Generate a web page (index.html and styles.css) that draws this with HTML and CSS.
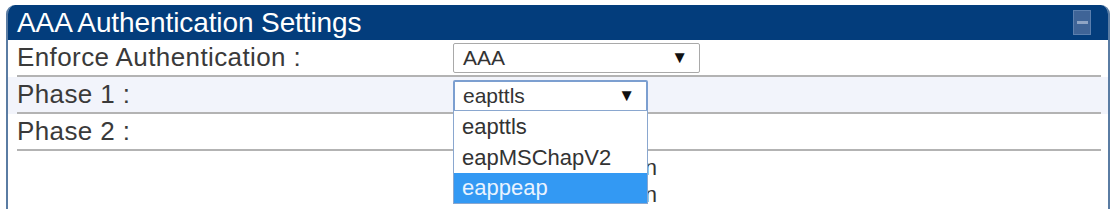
FILE: index.html
```html
<!DOCTYPE html>
<html lang="en">
<head>
    <meta charset="UTF-8">
    <title>AAA Authentication Settings</title>
    <link rel="stylesheet" href="styles.css">
</head>
<body>
<div class="panel">
    <div class="panel-head">
        <h2>AAA Authentication Settings</h2>
        <span class="collapse"><i></i></span>
    </div>

    <div class="row">
        <div class="row-inner">
            <div class="label">Enforce Authentication :</div>
            <div class="field">
                <div class="select wide">AAA<span class="arrow">&#9660;</span></div>
            </div>
        </div>
    </div>
    <div class="row alt">
        <div class="row-inner">
            <div class="label">Phase 1 :</div>
            <div class="field">
                <div class="select narrow focus">eapttls<span class="arrow">&#9660;</span></div>
                <ul class="options">
                    <li>eapttls</li>
                    <li>eapMSChapV2</li>
                    <li class="picked">eappeap</li>
                </ul>
            </div>
        </div>
    </div>
    <div class="row">
        <div class="row-inner">
            <div class="label">Phase 2 :</div>
            <div class="field"></div>
        </div>
    </div>

    <div class="extra">
        <div class="extra-line">Domain</div>
        <div class="extra-line">Domain</div>
    </div>
</div>
</body>
</html>
```

FILE: styles.css
```css
*{
    margin: 0;
    padding: 0;
    box-sizing: border-box;
}
body{
    background: #fff;
    font-family: "Liberation Sans", Arial, sans-serif;
    color: #333;
}
.panel{
    margin: 5px 2px 0 6px;
    height: 220px;
    border-left: 2px solid #5a7ca3;
    border-right: 2px solid #5a7ca3;
    border-radius: 9px 9px 0 0;
    overflow: hidden;
    position: relative;
}
.panel-head{
    height: 35px;
    background-color: #033d7c;
    display: flex;
    align-items: center;
    justify-content: space-between;
    padding: 0 17px 0 9px;
}
.panel-head h2{
    font-weight: normal;
    font-size: 28px;
    color: #fff;
    letter-spacing: -0.1px;
}
.collapse{
    width: 18px;
    height: 25px;
    background-color: #3f6497;
    border: 1px solid #5b7fae;
    display: flex;
    align-items: center;
    justify-content: center;
}
.collapse i{
    width: 11px;
    height: 3px;
    background-color: #8fa4c4;
}
.row{
    background-color: #fff;
}
.row.alt{
    background-color: #f2f4fb;
}
.row-inner{
    margin: 0 7px 0 9px;
    height: 37px;
    border-bottom: 2px solid #b3b3b3;
    display: flex;
    align-items: center;
}
.label{
    width: 436px;
    font-size: 26px;
    color: #3a3a3a;
    letter-spacing: 0.4px;
}
.field{
    position: relative;
    height: 100%;
    display: flex;
    align-items: center;
}
.select{
    height: 30px;
    border: 1px solid #a9a9a9;
    border-radius: 2px;
    background: #fff;
    font-size: 21px;
    padding: 0 11px 0 9px;
    display: flex;
    align-items: center;
    justify-content: space-between;
    color: #333;
}
.select.wide{
    width: 247px;
}
.select.narrow{
    width: 195px;
    height: 32px;
    margin-top: 2px;
}
.select.focus{
    border: 2px solid #7c9fd0;
    padding-left: 8px;
}
.arrow{
    font-size: 17px;
    color: #111;
}
.options{
    list-style: none;
    position: absolute;
    left: 0;
    top: 33px;
    width: 195px;
    background: #fff;
    border: 1px solid #8aa7cf;
    z-index: 2;
}
.options li{
    height: 31px;
    line-height: 31px;
    font-size: 22px;
    padding-left: 8px;
    color: #333;
}
.options li.picked{
    height: 30px;
    line-height: 30px;
    background-color: #3399f3;
    color: #e9f3ff;
}
.extra{
    margin-left: 445px;
    padding-top: 3px;
    width: 204px;
}
.extra-line{
    text-align: right;
    font-size: 22px;
    line-height: 27px;
    color: #333;
}
```
